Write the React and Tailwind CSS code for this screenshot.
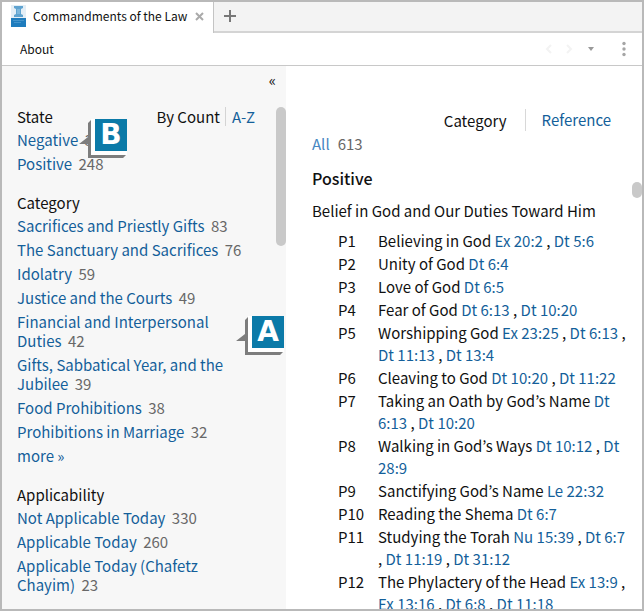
import React from "react";

const link = "text-[#145f9a]";

const categories = [
  ["Sacrifices and Priestly Gifts", 83],
  ["The Sanctuary and Sacrifices", 76],
  ["Idolatry", 59],
  ["Justice and the Courts", 49],
  ["Financial and Interpersonal Duties", 42],
  ["Gifts, Sabbatical Year, and the Jubilee", 39],
  ["Food Prohibitions", 38],
  ["Prohibitions in Marriage", 32],
];

const applicability = [
  ["Not Applicable Today", 330],
  ["Applicable Today", 260],
  ["Applicable Today (Chafetz Chayim)", 23],
];

const commandments = [
  ["P1", "Believing in God", ["Ex 20:2", "Dt 5:6"]],
  ["P2", "Unity of God", ["Dt 6:4"]],
  ["P3", "Love of God", ["Dt 6:5"]],
  ["P4", "Fear of God", ["Dt 6:13", "Dt 10:20"]],
  ["P5", "Worshipping God", ["Ex 23:25", "Dt 6:13", "Dt 11:13", "Dt 13:4"]],
  ["P6", "Cleaving to God", ["Dt 10:20", "Dt 11:22"]],
  ["P7", "Taking an Oath by God’s Name", ["Dt 6:13", "Dt 10:20"]],
  ["P8", "Walking in God’s Ways", ["Dt 10:12", "Dt 28:9"]],
  ["P9", "Sanctifying God’s Name", ["Le 22:32"]],
  ["P10", "Reading the Shema", ["Dt 6:7"]],
  ["P11", "Studying the Torah", ["Nu 15:39", "Dt 6:7", "Dt 11:19", "Dt 31:12"]],
  ["P12", "The Phylactery of the Head", ["Ex 13:9", "Ex 13:16", "Dt 6:8", "Dt 11:18"]],
];

function Facet({ title, items, more, children }) {
  return (
    <section>
      <div className="flex items-center justify-between">
        <h2>{title}</h2>
        {children}
      </div>
      <ul className="mt-1 flex flex-col gap-[5px] pr-2">
        {items.map(([label, count]) => (
          <li key={label}>
            <a href="#" className={link}>{label}</a>
            {" "}
            <span className="ml-[3px] text-[#686868]">{count}</span>
          </li>
        ))}
        {more && (
          <li>
            <a href="#" className={link}>more »</a>
          </li>
        )}
      </ul>
    </section>
  );
}

function Callout({ letter }) {
  return (
    <div className="relative h-10 w-12">
      <svg className="absolute inset-0" width="48" height="40" viewBox="0 0 48 40" aria-hidden="true">
        <path d="M12 1 L9 4 V18 L0 25 L9 25 V39 H44 L47 36 H12 Z" fill="#7d7d7d" />
        <path d="M12 0 H48 V36 H12 Z" fill="#fff" />
      </svg>
      <span className="absolute top-0 right-0 flex h-8 w-8 items-center justify-center bg-[#0b7aa8] font-['DejaVu_Sans'] text-[28px] leading-8 font-bold text-white">
        {letter}
      </span>
    </div>
  );
}

function BookIcon() {
  return (
    <svg width="15" height="22" viewBox="0 0 15 22" aria-hidden="true">
      <rect width="15" height="13" fill="#e3eef6" />
      <path d="M3 1 H12 V3 L10 4 V9 L12 10 V12 H3 V10 L5 9 V4 L3 3 Z" fill="#5fa3d0" />
      <path d="M6 4 H9 V9 H6 Z" fill="#7db7dc" />
      <rect y="13" width="15" height="9" fill="#1f7cbd" />
      <path d="M2 15.5 H13 M3 17.5 H10" stroke="#4594cb" />
    </svg>
  );
}

export default function App() {
  return (
    <div className="flex h-screen flex-col overflow-hidden border-2 border-[#b9b9b9] bg-white font-['Noto_Sans_CJK_KR',sans-serif] text-[15px] leading-[19px] text-[#111]">
      <header className="flex h-[31px] shrink-0 bg-[#f3f3f3] text-xs">
        <div className="flex items-center border-r border-[#c4c4c4] bg-white pr-[9px] pb-[3px] pl-[9px]">
          <BookIcon />
          <span className="ml-[7px] text-[#111]">Commandments of the Law</span>
          <button type="button" aria-label="Close tab" className="ml-2 text-[#aaa]">
            <svg width="9" height="9" viewBox="0 0 9 9" stroke="currentColor" strokeWidth="2">
              <path d="M1 1 L8 8 M8 1 L1 8" />
            </svg>
          </button>
        </div>
        <div className="flex flex-1 items-center border-b-2 border-[#d4d4d4] pb-px pl-[10px]">
          <button type="button" aria-label="New tab" className="text-[#777]">
            <svg width="12" height="12" viewBox="0 0 12 12" stroke="currentColor" strokeWidth="2">
              <path d="M6 0 V12 M0 6 H12" />
            </svg>
          </button>
        </div>
      </header>

      <div className="flex h-[33px] shrink-0 items-center border-b border-[#c8c8c8] pr-4 pb-px pl-[18px] text-xs">
        <button type="button" className="text-[#111]">About</button>
        <div className="ml-auto flex items-center">
          <button type="button" aria-label="Back" className="text-[#f3f3f3]">
            <svg width="7" height="10" viewBox="0 0 7 10" fill="none" stroke="currentColor" strokeWidth="2">
              <path d="M6 1 L2 5 L6 9" />
            </svg>
          </button>
          <button type="button" aria-label="Forward" className="ml-[14px] text-[#f3f3f3]">
            <svg width="7" height="10" viewBox="0 0 7 10" fill="none" stroke="currentColor" strokeWidth="2">
              <path d="M1 1 L5 5 L1 9" />
            </svg>
          </button>
          <button type="button" aria-label="History" className="ml-[15px] text-[#999]">
            <svg width="6" height="4" viewBox="0 0 6 4" fill="currentColor">
              <path d="M0 0 H6 L3 4 Z" />
            </svg>
          </button>
          <button type="button" aria-label="More options" className="ml-7 text-[#a5a5a5]">
            <svg width="4" height="16" viewBox="0 0 4 16" fill="currentColor">
              <circle cx="2" cy="2.5" r="1.7" />
              <circle cx="2" cy="8" r="1.7" />
              <circle cx="2" cy="13.5" r="1.7" />
            </svg>
          </button>
        </div>
      </div>

      <div className="flex min-h-0 flex-1">
        <aside className="relative flex w-[284px] shrink-0 bg-[#f7f7f7]">
          <div className="flex min-w-0 flex-1 flex-col pl-[15px]">
            <button type="button" aria-label="Collapse sidebar" className="mt-1 self-end leading-5">«</button>
            <div className="mt-[17px] flex flex-col gap-5 pr-[21px]">
              <Facet title="State" items={[["Negative", 365], ["Positive", 248]]}>
                <div className="flex items-center">
                  <span>By Count</span>
                  <a href="#" className={`ml-[5px] border-l border-[#d4d4d4] pl-[6px] ${link}`}>A-Z</a>
                </div>
              </Facet>
              <Facet title="Category" items={categories} more />
              <Facet title="Applicability" items={applicability} />
            </div>
          </div>
          <div className="w-[10px] shrink-0 pt-[41px]">
            <div className="h-[139px] rounded-full bg-[#c9c9c9]" />
          </div>
          <div className="absolute top-[53px] left-[77px]"><Callout letter="B" /></div>
          <div className="absolute top-[250px] left-[234px]"><Callout letter="A" /></div>
        </aside>

        <main className="min-w-0 flex-1 pt-[43px] pr-1 pl-[26px]">
          <nav className="flex items-center justify-end pr-[17px]">
            <span>Category</span>
            <a href="#" className={`ml-[18px] border-l border-[#d8d8d8] pl-4 leading-[22px] ${link}`}>Reference</a>
          </nav>
          <div className="mt-[3px]">
            <a href="#" className="text-[#4787c2]">All</a>
            <span className="ml-2 text-[#686868]">613</span>
          </div>
          <h1 className="mt-4 text-base leading-[19px] font-medium">Positive</h1>
          <h2 className="mt-[13px]">Belief in God and Our Duties Toward Him</h2>
          <ul className="mt-[10px] flex flex-col gap-px pl-[26px] leading-[22px]">
            {commandments.map(([id, title, refs]) => (
              <li key={id} className="flex">
                <span className="w-10 shrink-0">{id}</span>
                <span className="min-w-0 flex-1">
                  {title}{" "}
                  {refs.map((r, i) => (
                    <React.Fragment key={r}>
                      {i > 0 && " , "}
                      <a href="#" className={link}>{r}</a>
                    </React.Fragment>
                  ))}
                </span>
              </li>
            ))}
          </ul>
        </main>
        <div className="w-[10px] shrink-0 pt-[116px]">
          <div className="h-4 rounded-full bg-[#c9c9c9]" />
        </div>
      </div>
    </div>
  );
}
